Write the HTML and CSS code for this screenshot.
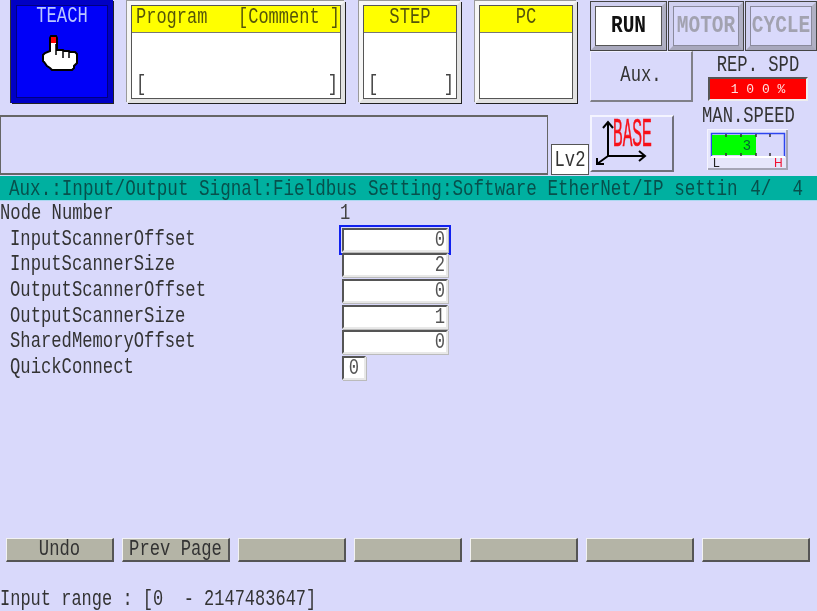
FILE: index.html
```html
<!DOCTYPE html>
<html lang="en">
<head>
<meta charset="utf-8">
<title>Teach pendant</title>
<link rel="stylesheet" href="styles.css">
</head>
<body>
<div class="screen">
  <header class="header">
    <div class="left">
      <div class="panels">
        <div class="teach">
          <span class="t teach-label">TEACH</span>
          <svg class="hand" width="38" height="36" viewBox="0 0 38 36">
            <path d="M9 16V3l1-2h5l1 2v12h6l1 1h5l1 1h5l2 2v9l-3 3v2l-2 2H11l-2-2-3-2-3-4-1-1v-6l2-2z" fill="#fff" stroke="#000" stroke-width="2"/>
            <path d="M10 2h5v6h-5z" fill="#f00"/>
            <path d="M15 9v11M22 16v7M28 17v6" stroke="#000" stroke-width="1.5" fill="none"/>
          </svg>
        </div>
        <div class="panel program">
          <div class="panel-inner">
            <div class="panel-title left-title"><span class="t">Program   [Comment ]</span></div>
            <div class="panel-body"><span class="t">[</span><span class="t">]</span></div>
          </div>
        </div>
        <div class="panel small">
          <div class="panel-inner">
            <div class="panel-title"><span class="t">STEP</span></div>
            <div class="panel-body"><span class="t">[</span><span class="t">]</span></div>
          </div>
        </div>
        <div class="panel small">
          <div class="panel-inner">
            <div class="panel-title"><span class="t">PC</span></div>
            <div class="panel-body"></div>
          </div>
        </div>
      </div>
      <div class="message-row">
        <div class="message"></div>
        <div class="level"><span class="t">Lv2</span></div>
      </div>
    </div>
    <div class="right">
      <div class="status-row">
        <div class="status run"><span class="t-status">RUN</span></div>
        <div class="status off motor"><span class="t-status">MOTOR</span></div>
        <div class="status off cycle"><span class="t-status">CYCLE</span></div>
      </div>
      <div class="aux-row">
        <div class="aux"><span class="t">Aux.</span></div>
        <div class="rep">
          <span class="t">REP. SPD</span>
          <div class="rep-bar">1 0 0 %</div>
        </div>
      </div>
      <div class="base-row">
        <div class="base">
          <svg class="axes" width="60" height="50" viewBox="0 0 60 50">
            <path d="M15 4V38M10 10l5-6 5 6M15 38H52M46 33l6 5-6 5M15 38L4 46M4 40v6h7" fill="none" stroke="#000" stroke-width="2"/>
          </svg>
          <span class="base-text">BASE</span>
        </div>
        <div class="man">
          <span class="t">MAN.SPEED</span>
          <svg class="gauge" width="81" height="41" viewBox="0 0 81 41">
            <rect x="0.5" y="0.5" width="80" height="40" fill="#e6e6fb" stroke="#f4f4ff"/>
            <path d="M80 1V40H1" fill="none" stroke="#a5a5b5" stroke-width="2"/>
            <path d="M4.5 28V4.5H77.5V28" fill="#d9d9fb" stroke="#2c45f0" stroke-width="1.5"/>
            <rect x="5" y="6" width="44" height="20" fill="#00ff00"/>
            <path d="M4 28H78" stroke="#fff" stroke-width="2"/>
            <path d="M19 5v3M34 5v3M49 5v3M63 5v3M19 24v3M34 24v3M49 24v3M63 24v3" stroke="#333" stroke-width="1.5"/>
            <text x="36" y="21" class="gauge-num">3</text>
            <text x="6" y="38" class="gauge-l">L</text>
            <text x="67" y="38" class="gauge-h">H</text>
          </svg>
        </div>
      </div>
    </div>
  </header>

  <div class="title-bar">
    <span class="t">Aux.:Input/Output Signal:Fieldbus Setting:Software EtherNet/IP settin</span>
    <span class="t">4/  4</span>
  </div>

  <main class="form">
    <div class="row head"><span class="t">Node Number</span><span class="t plain">1</span></div>
    <div class="row"><span class="t">InputScannerOffset</span><div class="field focus"><span class="t">0</span></div></div>
    <div class="row"><span class="t">InputScannerSize</span><div class="field"><span class="t">2</span></div></div>
    <div class="row"><span class="t">OutputScannerOffset</span><div class="field"><span class="t">0</span></div></div>
    <div class="row"><span class="t">OutputScannerSize</span><div class="field"><span class="t">1</span></div></div>
    <div class="row"><span class="t">SharedMemoryOffset</span><div class="field"><span class="t">0</span></div></div>
    <div class="row"><span class="t">QuickConnect</span><div class="field short"><span class="t">0</span></div></div>
  </main>

  <nav class="buttons">
    <button class="btn"><span class="t">Undo</span></button>
    <button class="btn"><span class="t">Prev Page</span></button>
    <button class="btn"></button>
    <button class="btn"></button>
    <button class="btn"></button>
    <button class="btn"></button>
    <button class="btn"></button>
  </nav>

  <footer class="hint"><span class="t">Input range : [0  - 2147483647]</span></footer>
</div>
</body>
</html>
```
FILE: styles.css
```css
html, body {
  margin: 0;
  padding: 0;
  background: #d9d9fb;
}
.screen {
  width: 817px;
  height: 611px;
  overflow: hidden;
  display: flex;
  flex-direction: column;
  background: #d9d9fb;
  color: #333;
  font-family: "Liberation Mono", monospace;
  font-size: 17.2px;
  line-height: 20px;
  filter: blur(0.45px);
}
.t {
  display: inline-block;
  white-space: pre;
  transform: scaleY(1.3);
}
.header {
  display: flex;
  height: 176px;
  flex: none;
}
.left {
  width: 590px;
  flex: none;
  display: flex;
  flex-direction: column;
}
.panels {
  display: flex;
  gap: 14px;
  height: 104px;
  padding-left: 11px;
  padding-top: 1px;
  box-sizing: border-box;
}
.teach {
  width: 102px;
  height: 103px;
  margin-top: -1px;
  box-sizing: border-box;
  background: #0000f8;
  border: 5px solid #0000c4;
  box-shadow: 0 0 0 1px #000 inset, 1px 1px 0 #222, -1px 0 0 #333;
  display: flex;
  flex-direction: column;
  align-items: center;
  position: relative;
}
.teach::after {
  content: "";
  position: absolute;
  inset: 0;
  border: 1px solid #000080;
}
.teach-label {
  color: #b9c6ff;
  margin-top: 2px;
  margin-left: 0;
  font-size: 17.2px;
}
.hand {
  margin-top: 8px;
  margin-left: -4px;
}
.panel {
  height: 102px;
  box-sizing: border-box;
  border: 4px solid;
  border-color: #f6f6f6 #e2e2e2 #e2e2e2 #f6f6f6;
  box-shadow: 1px 1px 0 #222, -1px -1px 0 #9a9a9a;
  background: #fff;
}
.program { width: 218px; }
.small { width: 102px; }
.panel-inner {
  height: 100%;
  box-sizing: border-box;
  border: 1px solid #555;
  display: flex;
  flex-direction: column;
}
.panel-title {
  height: 27px;
  flex: none;
  background: #ffff00;
  border-bottom: 1px solid #777;
  box-sizing: border-box;
  text-align: center;
  line-height: 24px;
  color: #55550a;
}
.left-title {
  text-align: left;
  padding-left: 4px;
  font-size: 17px;
}
.panel-body {
  flex: 1;
  display: flex;
  justify-content: space-between;
  align-items: flex-end;
  padding: 0 2px 3px 4px;
  color: #444;
}
.message-row {
  display: flex;
  align-items: flex-end;
  gap: 3px;
  margin-top: 11px;
  height: 60px;
}
.message {
  width: 549px;
  height: 60px;
  box-sizing: border-box;
  border: 2px solid #666;
  border-right-width: 1px;
  margin-left: -1px;
}
.level {
  width: 38px;
  height: 31px;
  box-sizing: border-box;
  background: #fff;
  border: 1px solid #555;
  text-align: center;
  line-height: 32px;
}
.right {
  width: 227px;
  flex: none;
  display: flex;
  flex-direction: column;
}
.status-row {
  display: flex;
  height: 51px;
  padding-top: 1px;
  box-sizing: border-box;
  gap: 1px;
}
.status {
  box-sizing: border-box;
  border: 4px solid;
  border-color: #d0d0f0 #b0b0c4 #a8a8bc #d0d0f0;
  box-shadow: 0 0 0 1px #444, inset 0 0 0 1px #555;
  display: flex;
  align-items: center;
  justify-content: center;
  margin: 1px;
}
.run { width: 75px; background: #fff; color: #111; }
.motor { width: 74px; }
.cycle { width: 70px; }
.off {
  color: #a2a2b0;
  box-shadow: 0 0 0 1px #444, inset 0 0 0 1px #8a8a9c;
}
.t-status {
  display: inline-block;
  font-size: 19.5px;
  font-weight: bold;
  transform: scaleY(1.25);
}
.aux-row {
  display: flex;
  height: 52px;
}
.aux {
  width: 103px;
  height: 51px;
  box-sizing: border-box;
  border-top: 1px solid #f0f0ff;
  border-left: 1px solid #f0f0ff;
  border-right: 2px solid #808088;
  border-bottom: 2px solid #808088;
  display: flex;
  align-items: center;
  justify-content: center;
}
.rep {
  flex: 1;
  display: flex;
  flex-direction: column;
  align-items: center;
  padding-top: 3px;
  padding-left: 6px;
}
.rep .t { margin-top: 2px; }
.rep-bar {
  width: 100px;
  height: 24px;
  margin-top: 1px;
  box-sizing: border-box;
  background: #ff0000;
  border: 2px solid;
  border-color: #555 #eee #eee #555;
  color: #ffe0e0;
  font-size: 13px;
  line-height: 22px;
  text-align: center;
  white-space: pre;
}
.base-row {
  display: flex;
  margin-top: 12px;
  height: 60px;
}
.base {
  width: 84px;
  height: 57px;
  box-sizing: border-box;
  border-top: 2px solid #f4f4ff;
  border-left: 2px solid #f4f4ff;
  border-right: 2px solid #70707a;
  border-bottom: 2px solid #70707a;
  position: relative;
}
.axes {
  position: absolute;
  left: 1px;
  top: 1px;
}
.base-text {
  position: absolute;
  left: 21px;
  top: -3px;
  color: #f81018;
  font-family: "Liberation Sans", sans-serif;
  font-size: 22px;
  line-height: 22px;
  display: inline-block;
  transform: scale(0.66, 1.75);
  transform-origin: left top;
  -webkit-text-stroke: 0.4px #f81018;
}
.man {
  flex: 1;
  display: flex;
  flex-direction: column;
  align-items: flex-start;
  margin-top: -9px;
  padding-left: 28px;
}
.man .t { line-height: 22px; }
.gauge {
  margin-left: 5px;
  margin-top: 1px;
  display: block;
}
.gauge-num {
  font-family: "Liberation Sans", sans-serif;
  font-size: 14px;
  fill: #063;
}
.gauge-l {
  font-family: "Liberation Sans", sans-serif;
  font-size: 12px;
  fill: #222;
}
.gauge-h {
  font-family: "Liberation Sans", sans-serif;
  font-size: 12px;
  fill: #f01030;
}
.title-bar {
  height: 24px;
  flex: none;
  background: #00b0a0;
  box-shadow: 0 1px 0 #aad8f0;
  display: flex;
  justify-content: space-between;
  align-items: center;
  padding: 0 14px 0 9px;
  font-size: 17.6px;
  color: #07504c;
}
.form {
  padding-top: 1px;
  flex: none;
  height: 338px;
  box-sizing: border-box;
  display: flex;
  flex-direction: column;
}
.row {
  height: 25.7px;
  flex: none;
  display: grid;
  grid-template-columns: 332px 1fr;
  align-items: center;
  padding-left: 10px;
}
.row.head {
  padding-left: 0;
  grid-template-columns: 340px 1fr;
}
.plain { color: #444; }
.field {
  width: 106px;
  height: 24px;
  box-sizing: border-box;
  background: #fff;
  border: 2px solid;
  border-color: #555 #e8e8e8 #e8e8e8 #555;
  box-shadow: 1px 1px 0 #bbb;
  text-align: right;
  line-height: 21px;
  padding-right: 1px;
  color: #555;
}
.field.short {
  width: 24px;
  text-align: center;
  padding-right: 0;
}
.focus {
  outline: 2px solid #1020f0;
  outline-offset: 1px;
}
.buttons {
  display: flex;
  gap: 8px;
  padding-left: 6px;
  height: 24px;
  flex: none;
}
.btn {
  width: 108px;
  height: 24px;
  padding: 0;
  box-sizing: border-box;
  background: #b4b4a6;
  border: 1px solid;
  border-color: #f2f2f2 #555 #555 #f2f2f2;
  border-width: 1px 2px 2px 1px;
  font: inherit;
  color: #333;
}
.hint {
  margin-top: 28px;
  line-height: 20px;
  font-size: 17px;
}
```
